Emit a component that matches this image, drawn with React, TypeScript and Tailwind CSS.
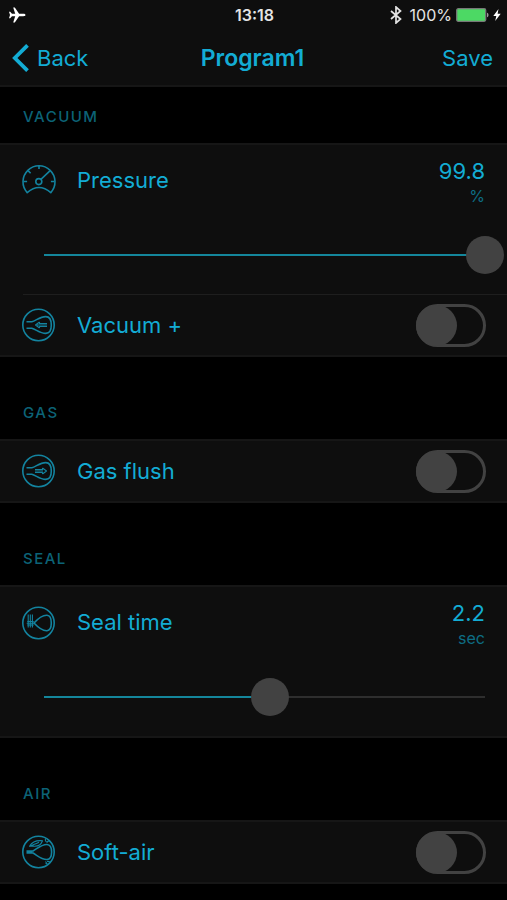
import { useState } from "react";
import type { ReactNode } from "react";

const icons: Record<string, ReactNode> = {
  pressure: (
    <>
      <path d="M5.2 28.6A16 16 0 1 1 28.8 28.6Q17 18.4 5.2 28.6Z" />
      <path d="M17 1.5v3.6M1.5 17.5h3.6M32.5 17.5h-3.6M6.3 6.9l2.3 2.3M18.9 15.4l9-8.5" />
      <circle cx="16.8" cy="17.6" r="3" />
    </>
  ),
  vacuum: (
    <>
      <circle cx="16.5" cy="17" r="15.7" />
      <path d="M4.5 13.8h5.3c4-1 8.4-5.3 14-5.2 3.4 0 5.500 2.400 5.500 8.400s-2.100 8.400-5.500 8.400c-5.600.1-10-4.200-14-5.200H4.500" />
      <path d="M17.500 14v1.500h7.500M17.500 20v-1.500h7.500M17.500 14l-4 3 4 3M15 17h10" strokeWidth="1.1" />
    </>
  ),
  gas: (
    <>
      <circle cx="16.5" cy="17" r="15.7" />
      <path d="M4.500 13.800h5.300c4-1 8.400-5.300 14-5.200 3.400 0 5.500 2.400 5.500 8.400s-2.100 8.400-5.500 8.400c-5.600.1-10-4.200-14-5.200H4.500" />
      <path d="M20.500 14v1.500H13M20.500 20v-1.500H13M20.500 14l4 3-4 3M13 17h8" strokeWidth="1.1" />
    </>
  ),
  seal: (
    <>
      <circle cx="16.5" cy="17" r="15.7" />
      <path d="M12 17c4-4.300 8.300-8 13-7.700 2.800.2 4.300 3.100 4.300 7.700s-1.500 7.500-4.300 7.700c-4.700.3-9-3.400-13-7.700Z" />
      <path d="M6.200 8.500v13M8.300 8.500v13M10.400 8.500v13M5.200 15.500h6.500M4.700 17.200h7.300M5.200 19h6.500" strokeWidth="1.1" />
    </>
  ),
  air: (
    <>
      <circle cx="16.5" cy="17" r="15.7" />
      <path d="M4.500 16h6.500c4.300-2.500 9-6.800 14-6.500 3.100.2 4.600 3.200 4.600 7.500s-1.500 7.300-4.600 7.500c-5 .3-9.700-4-14-6.500H4.500M4.500 17h6" />
      <path d="M7.500 11.300c2.500-4.300 7-6.200 13-5.600-1.500 4-5.500 6.300-10.800 5.200ZM8.500 11c3-1.500 5.500-2.200 8.500-3.800M23.500 3.500c-.5 2 .5 3.500 2.200 4M25 6.500l3-.5M23.500 26.500l2 3M25 26.500c1.500-.3 2.500.2 3 1M23.500 28.500l3 1" strokeWidth="1.1" />
    </>
  ),
};

function RowIcon({ name }: { name: string }) {
  return (
    <svg
      viewBox="0 0 34 34"
      className="size-[34px] shrink-0 text-[#13839f]"
      fill="none"
      stroke="currentColor"
      strokeWidth="1.6"
      strokeLinejoin="round"
      aria-hidden="true"
    >
      {icons[name]}
    </svg>
  );
}

function Section({ title, first, children }: { title: string; first?: boolean; children: ReactNode }) {
  return (
    <section>
      <h2
        className={`px-[23px] text-[15px] leading-5 font-medium tracking-widest text-[#0c6377] ${
          first ? "pt-5 pb-4" : "pt-[46px] pb-4"
        }`}
      >
        {title}
      </h2>
      <div className="border-y-2 border-[#161616] bg-[#0e0e0e]">{children}</div>
    </section>
  );
}

function SwitchRow({ id, icon, label }: { id: string; icon: string; label: string }) {
  return (
    <div className="flex h-[60px] items-center pr-[21px] pl-[22px]">
      <RowIcon name={icon} />
      <label htmlFor={id} className="ml-[21px] flex-1 text-[22px] leading-7">
        {label}
      </label>
      <input
        id={id}
        type="checkbox"
        role="switch"
        className="flex h-[43px] w-[70px] shrink-0 appearance-none items-center rounded-full border-3 border-[#424242] before:-ml-[3px] before:size-[41px] before:rounded-full before:bg-[#424242] checked:border-[#13839f] checked:before:ml-[26px]"
      />
    </div>
  );
}

type SliderRowProps = {
  id: string;
  icon: string;
  label: string;
  unit: string;
  initial: number;
  min: number;
  max: number;
};

function SliderRow({ id, icon, label, unit, initial, min, max }: SliderRowProps) {
  const [value, setValue] = useState(initial);
  const percent = ((value - min) / (max - min)) * 100;

  return (
    <div className="h-[149px]">
      <div className="flex pt-3 pr-[22px] pl-[22px]">
        <div className="mt-[7px]">
          <RowIcon name={icon} />
        </div>
        <label htmlFor={id} className="mt-[9px] ml-[21px] flex-1 text-[22px] leading-7">
          {label}
        </label>
        <div className="text-right">
          <div className="text-[22px] leading-7">{value.toFixed(1)}</div>
          <div className="text-base leading-[22px] text-[#0d6d84]">{unit}</div>
        </div>
      </div>
      <div className="mt-[29px] pr-[3px] pl-[25px]">
        <input
          id={id}
          type="range"
          min={min}
          max={max}
          step={0.1}
          value={value}
          onChange={(e) => setValue(Number(e.target.value))}
          style={{
            backgroundImage: `linear-gradient(to right, #14869b ${percent}%, #2e2e2e ${percent}%)`,
          }}
          className="block h-[38px] w-full appearance-none bg-[length:calc(100%-38px)_2px] bg-center bg-no-repeat [&::-webkit-slider-thumb]:size-[38px] [&::-webkit-slider-thumb]:appearance-none [&::-webkit-slider-thumb]:rounded-full [&::-webkit-slider-thumb]:bg-[#424242]"
        />
      </div>
    </div>
  );
}

function StatusBar() {
  return (
    <div className="grid h-[30px] grid-cols-3 items-center pr-[6px] pl-2 text-base text-[#e4e4e4]">
      <svg viewBox="0 0 18 16" className="h-4 w-[18px]" fill="white" aria-hidden="true">
        <path d="M17.500 8c0-.8-1-1.200-2.200-1.200h-4.200L6.800.5H5.200l2 6.300H4L2.200 4.700H1L2 8l-1 3.300h1.200L4 9.200h3.200l-2 6.300h1.600l4.300-6.300h4.200c1.200 0 2.200-.4 2.200-1.200Z" />
      </svg>
      <span className="text-center font-semibold">13:18</span>
      <div className="flex items-center justify-end">
        <svg viewBox="0 0 12 18" className="h-[18px] w-3" fill="none" stroke="currentColor" strokeWidth="1.7" aria-hidden="true">
          <path d="m1 5 9.500 8L6 17V1l4.500 4L1 13" />
        </svg>
        <span className="ml-2">100%</span>
        <svg viewBox="0 0 33 14" className="ml-1 h-[14px] w-[33px]" aria-hidden="true">
          <rect x=".7" y=".7" width="29" height="12.6" rx="1.5" fill="#4cd964" stroke="#777" strokeWidth="1.3" />
          <path d="M31 4.700c2 .5 2 4.100 0 4.600Z" fill="#999" />
        </svg>
        <svg viewBox="0 0 8 12" className="ml-1 h-3 w-2" fill="white" aria-hidden="true">
          <path d="M5.500 0 .3 7h3L2.200 12 7.700 4.800H4.600Z" />
        </svg>
      </div>
    </div>
  );
}

export default function App() {
  return (
    <div className="min-h-screen bg-black font-['Inter',sans-serif] text-[#13acd4]">
      <header className="border-b-2 border-[#161616] bg-[#0e0e0e]">
        <StatusBar />
        <nav className="grid h-[55px] grid-cols-3 items-center pr-[14px] pl-3 text-[22px] leading-7">
          <button type="button" className="flex items-center gap-2 justify-self-start">
            <svg viewBox="0 0 17 28" className="h-7 w-[17px]" fill="none" stroke="currentColor" strokeWidth="3.8" aria-hidden="true">
              <path d="M15.500 1.300 2.800 14l12.700 12.700" />
            </svg>
            Back
          </button>
          <h1 className="text-center text-[23px] font-semibold">Program1</h1>
          <button type="button" className="justify-self-end">
            Save
          </button>
        </nav>
      </header>
      <main>
        <Section title="VACUUM" first>
          <SliderRow id="pressure" icon="pressure" label="Pressure" unit="%" initial={99.8} min={0} max={99.8} />
          <div className="ml-[23px] h-px bg-[#1e1e1e]" />
          <SwitchRow id="vacuum-plus" icon="vacuum" label="Vacuum +" />
        </Section>
        <Section title="GAS">
          <SwitchRow id="gas-flush" icon="gas" label="Gas flush" />
        </Section>
        <Section title="SEAL">
          <SliderRow id="seal-time" icon="seal" label="Seal time" unit="sec" initial={2.2} min={0.3} max={4} />
        </Section>
        <Section title="AIR">
          <SwitchRow id="soft-air" icon="air" label="Soft-air" />
        </Section>
      </main>
    </div>
  );
}
